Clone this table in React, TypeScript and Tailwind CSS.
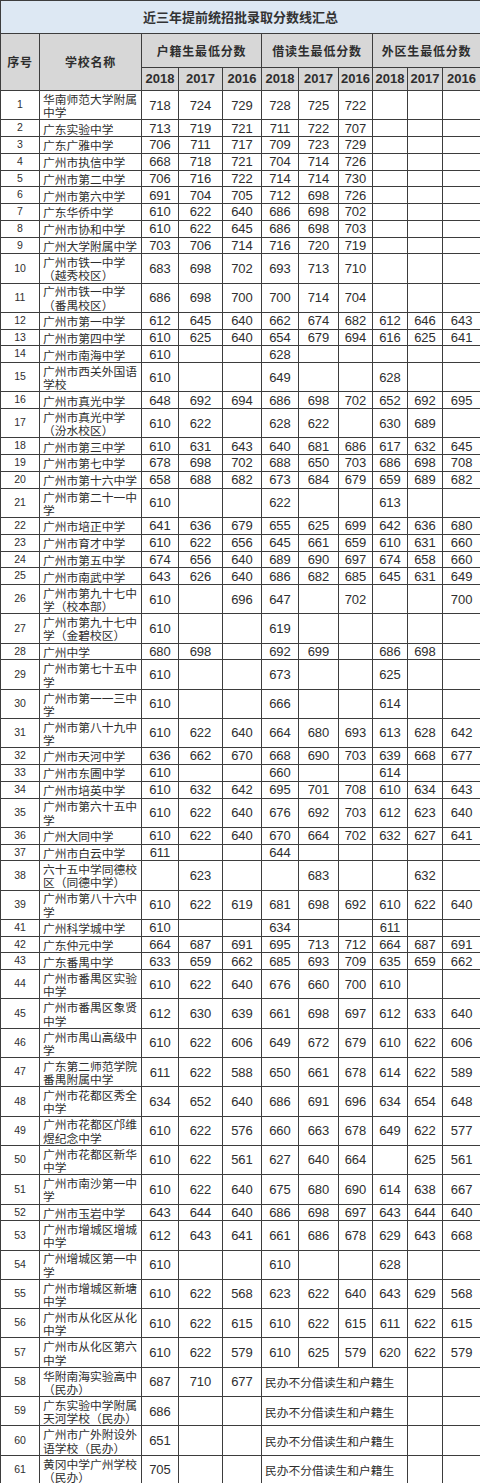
const raw = `1|华南师范大学附属/中学|718 724 729 728 725 722 - - -
2|广东实验中学|713 719 721 711 722 707 - - -
3|广东广雅中学|706 711 717 709 723 729 - - -
4|广州市执信中学|668 718 721 704 714 726 - - -
5|广州市第二中学|706 716 722 714 714 730 - - -
6|广州市第六中学|691 704 705 712 698 726 - - -
7|广东华侨中学|610 622 640 686 698 702 - - -
8|广州市协和中学|610 622 645 686 698 703 - - -
9|广州大学附属中学|703 706 714 716 720 719 - - -
10|广州市铁一中学/（越秀校区）|683 698 702 693 713 710 - - -
11|广州市铁一中学/（番禺校区）|686 698 700 700 714 704 - - -
12|广州市第一中学|612 645 640 662 674 682 612 646 643
13|广州市第四中学|610 625 640 654 679 694 616 625 641
14|广州市南海中学|610 - - 628 - - - - -
15|广州市西关外国语/学校|610 - - 649 - - 628 - -
16|广州市真光中学|648 692 694 686 698 702 652 692 695
17|广州市真光中学/（汾水校区）|610 622 - 628 622 - 630 689 -
18|广州市第三中学|610 631 643 640 681 686 617 632 645
19|广州市第七中学|678 698 702 688 650 703 686 698 708
20|广州市第十六中学|658 688 682 673 684 679 659 689 682
21|广州市第二十一中/学|610 - - 622 - - 613 - -
22|广州市培正中学|641 636 679 655 625 699 642 636 680
23|广州市育才中学|610 622 656 645 661 659 610 631 660
24|广州市第五中学|674 656 640 689 690 697 674 658 660
25|广州市南武中学|643 626 640 686 682 685 645 631 649
26|广州市第九十七中/学（校本部）|610 - 696 647 - 702 - - 700
27|广州市第九十七中/学（金碧校区）|610 - - 619 - - - - -
28|广州中学|680 698 - 692 699 - 686 698 -
29|广州市第七十五中/学|610 - - 673 - - 625 - -
30|广州市第一一三中/学|610 - - 666 - - 614 - -
31|广州市第八十九中/学|610 622 640 664 680 693 613 628 642
32|广州市天河中学|636 662 670 668 690 703 639 668 677
33|广州市东圃中学|610 - - 660 - - 614 - -
34|广州市培英中学|610 632 642 695 701 708 610 634 643
35|广州市第六十五中/学|610 622 640 676 692 703 612 623 640
36|广州大同中学|610 622 640 670 664 702 632 627 641
37|广州市白云中学|611 - - 644 - - - - -
38|六十五中学同德校/区（同德中学）|- 623 - - 683 - - 632 -
39|广州市第八十六中/学|610 622 619 681 698 692 610 622 640
41|广州科学城中学|610 - - 634 - - 611 - -
42|广东仲元中学|664 687 691 695 713 712 664 687 691
43|广东番禺中学|633 659 662 685 693 709 635 659 662
44|广州市番禺区实验/中学|610 622 640 676 660 700 610 - -
45|广州市番禺区象贤/中学|612 630 639 661 698 697 612 633 640
46|广州市禺山高级中/学|610 622 606 649 672 679 610 622 606
47|广东第二师范学院/番禺附属中学|611 622 588 650 661 678 614 622 589
48|广州市花都区秀全/中学|634 652 640 686 691 696 634 654 648
49|广州市花都区邝维/煜纪念中学|610 622 576 660 663 678 649 622 577
50|广州市花都区新华/中学|610 622 561 627 640 664 - 625 561
51|广州市南沙第一中/学|610 622 640 675 680 690 614 638 667
52|广州市玉岩中学|643 644 640 686 698 697 643 644 640
53|广州市增城区增城/中学|612 643 641 661 686 678 629 643 668
54|广州增城区第一中/学|610 - - 610 - - 628 - -
55|广州市增城区新塘/中学|610 622 568 623 622 640 643 629 568
56|广州市从化区从化/中学|610 622 615 610 622 615 611 622 615
57|广州市从化区第六/中学|610 622 579 610 625 579 620 622 579
58|华附南海实验高中/（民办）|687 710 677 M - -
59|广东实验中学附属/天河学校（民办）|686 - - M - -
60|广州市广外附设外/语学校（民办）|651 - - M - -
61|黄冈中学广州学校/（民办）|705 - - M - -`

type Row = { no: string; name: string[]; vals: string[] }

const rows: Row[] = raw.split('\n').map((line) => {
  const [no, name, v] = line.split('|')
  return { no, name: name.split('/'), vals: v.split(' ') }
})

const years = ['2018', '2017', '2016']
const groups = ['户籍生最低分数', '借读生最低分数', '外区生最低分数']

const cell = 'border border-[#3d3d3d] p-0 text-center align-middle'
const cjk = "font-['Noto_Sans_CJK_SC',sans-serif]"
const num = "font-['Liberation_Sans','Noto_Sans_CJK_SC',sans-serif]"

export default function App() {
  return (
    <div className="w-[480px] bg-white text-[#2e2e2e]">
      <table className="w-[480px] table-fixed border-collapse">
        <colgroup>
          <col className="w-[39px]" />
          <col className="w-[102px]" />
          <col className="w-[37px]" />
          <col className="w-[44px]" />
          <col className="w-[39px]" />
          <col className="w-[37px]" />
          <col className="w-[40px]" />
          <col className="w-[34px]" />
          <col className="w-[35px]" />
          <col className="w-[35px]" />
          <col className="w-[38px]" />
        </colgroup>
        <thead>
          <tr className="h-[33px] bg-[#dde8f3]">
            <th colSpan={11} className={`${cell} ${cjk} text-[13px] font-bold text-[#333]`}>
              近三年提前统招批录取分数线汇总
            </th>
          </tr>
          <tr className="h-[34px] bg-[#d7d7d7]">
            <th rowSpan={2} className={`${cell} ${cjk} text-[12px] tracking-[0.8px] font-bold`}>
              序号
            </th>
            <th rowSpan={2} className={`${cell} ${cjk} text-[12px] tracking-[0.8px] font-bold`}>
              学校名称
            </th>
            {groups.map((g) => (
              <th key={g} colSpan={3} className={`${cell} ${cjk} text-[12px] tracking-[0.8px] font-bold`}>
                {g}
              </th>
            ))}
          </tr>
          <tr className="h-[23px] bg-[#d7d7d7]">
            {groups.map((g) =>
              years.map((y) => (
                <th key={g + y} className={`${cell} ${num} text-[13px] font-bold`}>
                  {y}
                </th>
              ))
            )}
          </tr>
        </thead>
        <tbody>
          {rows.map((r) => {
            const tall = r.name.length > 1
            const merged = r.vals.indexOf('M')
            return (
              <tr key={r.no} className={tall ? 'h-[29.3px]' : 'h-[16.7px]'}>
                <td className={`${cell} ${num} text-[10.5px]`}>{r.no}</td>
                <td className={`${cell} ${cjk} pl-[3px] text-left text-[11.75px] leading-[13.3px]`}>
                  {r.name.map((n, i) => (
                    <div key={i} className="whitespace-nowrap">
                      {n}
                    </div>
                  ))}
                </td>
                {r.vals.map((v, i) =>
                  i === merged ? (
                    <td
                      key={i}
                      colSpan={4}
                      className={`${cell} ${cjk} pl-[3px] text-left text-[11.75px] leading-[13.3px]`}
                    >
                      民办不分借读生和户籍生
                    </td>
                  ) : (
                    <td key={i} className={`${cell} ${num} text-[13px] leading-[13.3px]`}>
                      {v === '-' ? '' : v}
                    </td>
                  )
                )}
              </tr>
            )
          })}
        </tbody>
      </table>
    </div>
  )
}
